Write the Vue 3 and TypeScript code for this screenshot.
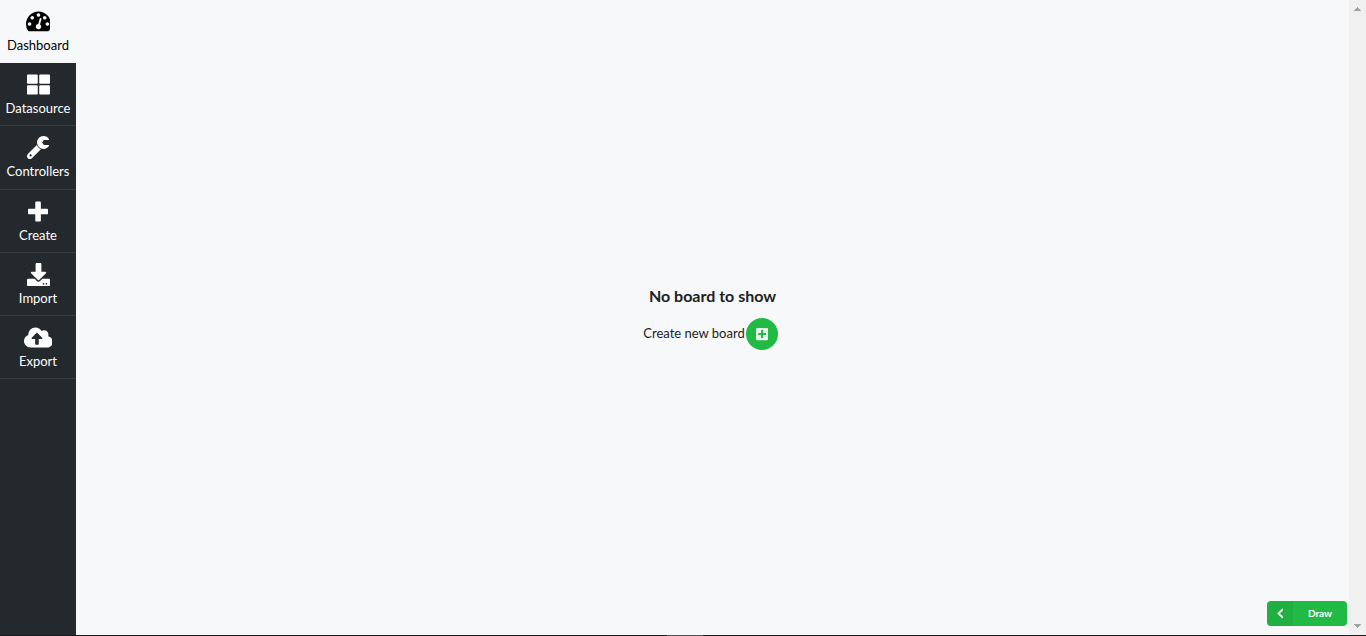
<script setup lang="ts">
import { ref } from 'vue'

interface MenuItem {
  label: string
  viewBox: string
  path: string
}

const items: MenuItem[] = [
  {
    label: 'Dashboard',
    viewBox: '0 148 1792 1649',
    path: 'M384 1152q0-53-37.5-90.5t-90.5-37.5-90.5 37.5-37.5 90.5 37.5 90.5 90.5 37.5 90.5-37.5 37.5-90.5zm192-448q0-53-37.5-90.5t-90.5-37.5-90.5 37.5-37.5 90.5 37.5 90.5 90.5 37.5 90.5-37.5 37.5-90.5zm428 481l101-382q6-26-7.5-48.5t-38.5-29.5-48 6.5-30 39.5l-101 382q-60 5-107 43.5t-63 98.5q-20 77 20 146t117 89 146-20 89-117q16-60-6-117t-72-91zm660-33q0-53-37.5-90.5t-90.5-37.5-90.5 37.5-37.5 90.5 37.5 90.5 90.5 37.5 90.5-37.5 37.5-90.5zm-640-640q0-53-37.5-90.5t-90.5-37.5-90.5 37.5-37.5 90.5 37.5 90.5 90.5 37.5 90.5-37.5 37.5-90.5zm448 192q0-53-37.5-90.5t-90.5-37.5-90.5 37.5-37.5 90.5 37.5 90.5 90.5 37.5 90.5-37.5 37.5-90.5zm320 448q0 261-141 483-19 29-54 29h-1402q-35 0-54-29-141-221-141-483 0-182 71-348t191-286 286-191 348-71 348 71 286 191 191 286 71 348z',
  },
  {
    label: 'Datasource',
    viewBox: '0 0 512 512',
    path: 'M296 32h192c13.255 0 24 10.745 24 24v160c0 13.255-10.745 24-24 24H296c-13.255 0-24-10.745-24-24V56c0-13.255 10.745-24 24-24zm-80 0H24C10.745 32 0 42.745 0 56v160c0 13.255 10.745 24 24 24h192c13.255 0 24-10.745 24-24V56c0-13.255-10.745-24-24-24zM0 296v160c0 13.255 10.745 24 24 24h192c13.255 0 24-10.745 24-24V296c0-13.255-10.745-24-24-24H24c-13.255 0-24 10.745-24 24zm296 184h192c13.255 0 24-10.745 24-24V296c0-13.255-10.745-24-24-24H296c-13.255 0-24 10.745-24 24v160c0 13.255 10.745 24 24 24z',
  },
  {
    label: 'Controllers',
    viewBox: '0 0 512 512',
    path: 'M481.156 200c9.3 0 15.12 10.155 10.325 18.124C466.295 259.992 420.419 288 368 288c-79.222 0-143.501-63.974-143.997-143.079C223.505 65.469 288.548-.001 368.002 0c52.362.001 98.196 27.949 123.4 69.743C496.24 77.766 490.523 88 481.154 88H376l-40 56 40 56h105.156zm-171.649 93.003L109.255 493.255c-24.994 24.993-65.515 24.994-90.51 0-24.993-24.994-24.993-65.516 0-90.51L218.991 202.5c16.16 41.197 49.303 74.335 90.516 90.503zM104 432c0-13.255-10.745-24-24-24s-24 10.745-24 24 10.745 24 24 24 24-10.745 24-24z',
  },
  {
    label: 'Create',
    viewBox: '0 0 448 512',
    path: 'M448 294.2v-76.4c0-13.3-10.7-24-24-24H286.2V56c0-13.3-10.7-24-24-24h-76.4c-13.3 0-24 10.7-24 24v137.8H24c-13.3 0-24 10.7-24 24v76.4c0 13.3 10.7 24 24 24h137.8V456c0 13.3 10.7 24 24 24h76.4c13.3 0 24-10.7 24-24V318.2H424c13.3 0 24-10.7 24-24z',
  },
  {
    label: 'Import',
    viewBox: '0 0 512 512',
    path: 'M216 0h80c13.3 0 24 10.7 24 24v168h87.7c17.8 0 26.7 21.5 14.1 34.1L269.7 378.3c-7.5 7.5-19.8 7.5-27.3 0L90.1 226.1c-12.6-12.6-3.7-34.1 14.1-34.1H192V24c0-13.3 10.7-24 24-24zm296 376v112c0 13.3-10.7 24-24 24H24c-13.3 0-24-10.7-24-24V376c0-13.3 10.7-24 24-24h146.7l49 49c20.1 20.1 52.5 20.1 72.6 0l49-49H488c13.3 0 24 10.7 24 24zm-124 88c0-11-9-20-20-20s-20 9-20 20 9 20 20 20 20-9 20-20zm64 0c0-11-9-20-20-20s-20 9-20 20 9 20 20 20 20-9 20-20z',
  },
  {
    label: 'Export',
    viewBox: '0 0 640 512',
    path: 'M537.6 226.6c4.1-10.7 6.4-22.4 6.4-34.6 0-53-43-96-96-96-19.7 0-38.1 6-53.3 16.2C367 64.2 315.3 32 256 32c-88.4 0-160 71.6-160 160 0 2.7.1 5.4.2 8.1C40.2 219.8 0 273.2 0 336c0 79.5 64.5 144 144 144h368c70.7 0 128-57.3 128-128 0-61.9-44-113.6-102.4-125.4zM393.4 288H328v112c0 8.8-7.2 16-16 16h-48c-8.8 0-16-7.2-16-16V288h-65.4c-14.3 0-21.4-17.2-11.3-27.4l105.4-105.4c6.2-6.2 16.4-6.2 22.6 0l105.4 105.4c10.1 10.2 2.9 27.4-11.3 27.4z',
  },
]

const active = ref('Dashboard')
</script>

<template>
  <div class="page">
    <div class="workspace">
      <nav class="sidebar" aria-label="Main menu">
        <div class="menu">
          <a
            v-for="item in items"
            :key="item.label"
            href="#"
            class="item"
            :class="{ active: item.label === active }"
            @click.prevent="active = item.label"
          >
            <svg class="item-icon" :viewBox="item.viewBox" aria-hidden="true"><path :d="item.path" /></svg>
            <span class="item-label">{{ item.label }}</span>
          </a>
        </div>
      </nav>

      <main class="content">
        <section class="empty">
          <h1 class="title">No board to show</h1>
          <div class="create">
            <label class="create-label" for="create-board">Create new board</label>
            <button id="create-board" class="round" type="button">
              <svg class="round-icon" viewBox="0 0 448 512" aria-hidden="true">
                <path d="M400 32H48C21.5 32 0 53.5 0 80v352c0 26.5 21.5 48 48 48h352c26.5 0 48-21.5 48-48V80c0-26.5-21.5-48-48-48zm-32 252c0 6.6-5.4 12-12 12h-92v92c0 6.6-5.4 12-12 12h-56c-6.6 0-12-5.4-12-12v-92H92c-6.6 0-12-5.4-12-12v-56c0-6.6 5.4-12 12-12h92v-92c0-6.6 5.4-12 12-12h56c6.6 0 12 5.4 12 12v92h92c6.6 0 12 5.4 12 12v56z" />
              </svg>
            </button>
          </div>
        </section>
        <button class="draw" type="button">
          <span class="draw-icon">
            <svg viewBox="0 0 320 512" aria-hidden="true">
              <path d="M34.52 239.03L228.87 44.69c9.37-9.37 24.57-9.37 33.94 0l22.67 22.67c9.36 9.36 9.37 24.52.04 33.9L131.49 256l154.02 154.75c9.34 9.38 9.32 24.54-.04 33.9l-22.67 22.67c-9.37 9.37-24.57 9.37-33.94 0L34.52 272.97c-9.37-9.37-9.37-24.57 0-33.94z" />
            </svg>
          </span>
          <span class="draw-label">Draw</span>
        </button>
      </main>

      <div class="scrollbar" aria-hidden="true">
        <svg viewBox="0 0 17 17"><path d="M8 7h1v1h1v1h1v1h1v1H5v-1h1V9h1V8h1z" /></svg>
        <svg viewBox="0 0 17 17"><path d="M5 6h7v1h-1v1h-1v1H9v1H8V9H7V8H6V7H5z" /></svg>
      </div>
    </div>
    <footer class="drawer"><span class="handle"></span></footer>
  </div>
</template>

<style>
body {
  margin: 0;
}
</style>

<style scoped>
.page {
  display: flex;
  flex-direction: column;
  height: 100vh;
  overflow: hidden;
  background: #f7f8fa;
  color: #212121;
  font-family: Lato, "Liberation Sans", sans-serif;
  font-size: 13px;
  line-height: 18px;
}
.workspace {
  display: flex;
  flex: 1;
  min-height: 0;
}
.sidebar {
  flex: none;
  width: 76px;
  background: #24292d;
}
.menu {
  display: grid;
  grid-auto-rows: 1fr;
  height: 379px;
}
.item {
  display: flex;
  flex-direction: column;
  align-items: center;
  gap: 3px;
  box-sizing: border-box;
  padding-top: 10px;
  border-bottom: 1px solid #363b3f;
  color: #fff;
  text-decoration: none;
}
.item.active {
  background: #f7f8fa;
  border-color: #f7f8fa;
  color: #000;
}
.item-icon {
  height: 23px;
  fill: currentColor;
}
.content {
  display: flex;
  flex: 1;
  flex-direction: column;
  min-width: 0;
}
.empty {
  display: flex;
  flex: 1;
  flex-direction: column;
  align-items: center;
  justify-content: center;
  gap: 12px;
  padding-top: 35px;
}
.title {
  margin: 0;
  font-size: 16px;
  font-weight: 700;
  line-height: 20px;
}
.create {
  display: flex;
  align-items: center;
  gap: 1px;
}
.create-label {
  padding-bottom: 2px;
}
.round {
  display: flex;
  align-items: center;
  justify-content: center;
  width: 32px;
  height: 32px;
  margin-right: 4px;
  padding: 0;
  border: 0;
  border-radius: 50%;
  background: #21ba45;
}
.round-icon {
  height: 14px;
  fill: #fff;
  opacity: 0.9;
}
.draw {
  display: flex;
  align-self: flex-end;
  width: 80px;
  height: 25px;
  margin: 0 2px 9px 0;
  padding: 0;
  overflow: hidden;
  border: 0;
  border-radius: 4px;
  background: #21ba45;
  color: #fff;
  font-family: inherit;
  font-size: 10px;
  font-weight: 700;
  line-height: 25px;
}
.draw-icon {
  display: flex;
  align-items: center;
  justify-content: center;
  width: 26px;
  height: 25px;
  background: rgba(0, 0, 0, 0.05);
}
.draw-icon svg {
  height: 11px;
  fill: #fff;
  stroke: #fff;
  stroke-width: 20;
  opacity: 0.9;
}
.draw-label {
  flex: 1;
  text-align: center;
}
.scrollbar {
  display: flex;
  flex: none;
  flex-direction: column;
  justify-content: space-between;
  width: 17px;
  background: #f0f0f0;
}
.scrollbar svg {
  width: 17px;
  height: 17px;
  fill: #a3a3a3;
  shape-rendering: crispEdges;
}
.drawer {
  display: flex;
  flex: none;
  justify-content: center;
  height: 1px;
  padding-left: 4px;
  background: #1b1c1d;
}
.handle {
  width: 36px;
  background: #545454;
}
</style>
